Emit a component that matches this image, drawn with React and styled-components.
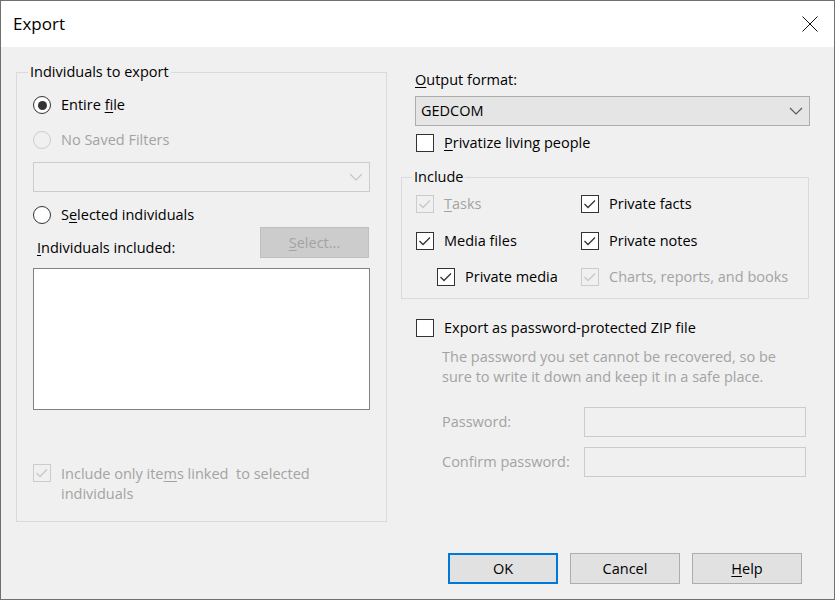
import React from "react";
import styled, { createGlobalStyle, css } from "styled-components";

const FONT = `"Open Sans", "Noto Sans", sans-serif`;

const GlobalStyle = createGlobalStyle`
  html, body { margin: 0; padding: 0; background: #f0f0f0; }
  body { font-family: ${FONT}; font-size: 14.5px; color: #000; }
  u { text-decoration-thickness: 1px; text-underline-offset: 2px; }
`;

const DISABLED = "#a3a3a3";

const Window = styled.div`
  width: 835px;
  height: 600px;
  box-sizing: border-box;
  border: 1px solid #707070;
  display: flex;
  flex-direction: column;
  background: #f0f0f0;
  font-family: ${FONT};
  font-size: 14.5px;
  line-height: 20px;
`;

const TitleBar = styled.div`
  height: 46px;
  flex: none;
  background: #fff;
  display: flex;
  align-items: center;
  justify-content: space-between;
  padding: 0 16px 0 12px;
`;

const Title = styled.div`
  font-size: 17px;
  line-height: 22px;
`;

const CloseIcon = styled.svg`
  width: 16px;
  height: 16px;
  display: block;
`;

const Body = styled.div`
  flex: 1;
  display: flex;
  flex-direction: column;
  padding: 0 0 15px 15px;
`;

const Columns = styled.div`
  display: flex;
  align-items: flex-start;
  padding-top: 15px;
`;

const GroupBox = styled.fieldset`
  margin: 0;
  margin-top: ${(p) => p.$mt || 0}px;
  min-width: 0;
  box-sizing: border-box;
  width: ${(p) => p.$width}px;
  border: 1px solid #dadada;
  padding: ${(p) => p.$padding};
`;

const GroupTitle = styled.legend`
  padding: 0 2px;
  margin-left: ${(p) => p.$offset}px;
  line-height: 20px;
`;

const Stack = styled.div`
  display: flex;
  flex-direction: column;
`;

const Row = styled.div`
  display: flex;
  align-items: ${(p) => p.$align || "center"};
  gap: 10px;
  margin-top: ${(p) => p.$mt || 0}px;
  margin-left: ${(p) => p.$ml || 0}px;
  color: ${(p) => (p.$disabled ? DISABLED : "#000")};
  min-height: 20px;
  white-space: nowrap;
`;

const RadioCircle = styled.span`
  flex: none;
  width: 18px;
  height: 18px;
  box-sizing: border-box;
  border-radius: 50%;
  border: 1px solid ${(p) => (p.$disabled ? "#cccccc" : "#333333")};
  background: ${(p) => (p.$disabled ? "#f0f0f0" : "#fff")};
  display: flex;
  align-items: center;
  justify-content: center;
  ${(p) =>
    p.$checked &&
    css`
      &::after {
        content: "";
        width: 9px;
        height: 9px;
        border-radius: 50%;
        background: #333;
      }
    `}
`;

const Box = styled.span`
  flex: none;
  width: 18px;
  height: 18px;
  box-sizing: border-box;
  border: 1px solid ${(p) => (p.$disabled ? "#cccccc" : "#333333")};
  background: ${(p) => (p.$disabled ? "#f0f0f0" : "#fff")};
  display: flex;
  align-items: center;
  justify-content: center;
`;

const Radio = ({ checked, disabled, children, mt }) => (
  <Row $mt={mt} $disabled={disabled}>
    <RadioCircle $checked={checked} $disabled={disabled} />
    <span>{children}</span>
  </Row>
);

const CheckBox = ({ checked, disabled }) => (
  <Box $disabled={disabled}>
    {checked && (
      <svg width="16" height="16" viewBox="0 0 16 16">
        <polyline
          points="2.5,8 6,11.5 13,4.5"
          fill="none"
          stroke={disabled ? "#c8c8c8" : "#333"}
          strokeWidth="1.3"
        />
      </svg>
    )}
  </Box>
);

const Check = ({ checked, disabled, children, mt, ml, align }) => (
  <Row $mt={mt} $ml={ml} $disabled={disabled} $align={align}>
    <CheckBox checked={checked} disabled={disabled} />
    <span>{children}</span>
  </Row>
);

const Combo = styled.div`
  box-sizing: border-box;
  height: 30px;
  margin-top: ${(p) => p.$mt || 0}px;
  margin-left: ${(p) => p.$ml || 0}px;
  width: ${(p) => p.$width}px;
  border: 1px solid ${(p) => (p.$disabled ? "#cccccc" : "#adadad")};
  background: ${(p) => (p.$disabled ? "#f0f0f0" : "#e5e5e5")};
  display: flex;
  align-items: center;
  justify-content: space-between;
  padding: 0 6px 0 5px;
`;

const Chevron = ({ disabled }) => (
  <svg width="14" height="8" viewBox="0 0 14 8">
    <polyline
      points="1,1 7,7 13,1"
      fill="none"
      stroke={disabled ? "#c4c4c4" : "#555"}
      strokeWidth="1.1"
    />
  </svg>
);

const IncludedRow = styled.div`
  display: flex;
  align-items: flex-end;
  justify-content: space-between;
  margin-top: 2px;
  padding: 0 2px 0 4px;
`;

const WinButton = styled.button`
  box-sizing: border-box;
  width: ${(p) => p.$width || 110}px;
  height: 31px;
  font-family: ${FONT};
  font-size: 14.5px;
  padding: 0;
  color: ${(p) => (p.disabled ? DISABLED : "#000")};
  background: ${(p) => (p.disabled ? "#cccccc" : "#e1e1e1")};
  border: ${(p) =>
    p.$default ? "2px solid #0078d7" : p.disabled ? "1px solid #bfbfbf" : "1px solid #adadad"};
`;

const ListBox = styled.div`
  margin-top: 10px;
  height: 142px;
  width: 337px;
  box-sizing: border-box;
  background: #fff;
  border: 1px solid #828282;
`;

const RightColumn = styled.div`
  margin-left: 14px;
  width: 409px;
  padding-top: 8px;
  display: flex;
  flex-direction: column;
`;

const Label = styled.div`
  margin-left: ${(p) => p.$ml || 0}px;
  color: ${(p) => (p.$disabled ? DISABLED : "#000")};
  white-space: nowrap;
`;

const IncludeGrid = styled.div`
  display: grid;
  grid-template-columns: 165px 1fr;
  grid-template-rows: 20px 20px 20px;
  row-gap: 17px;
  margin-top: 7px;
  & > :nth-child(5),
  & > :nth-child(6) {
    margin-top: -2px;
  }
`;

const Note = styled.div`
  margin: 9px 0 0 41px;
  color: ${DISABLED};
  line-height: 20px;
`;

const FieldRow = styled.div`
  display: flex;
  align-items: center;
  margin: ${(p) => p.$mt}px 0 0 41px;
`;

const FieldLabel = styled.div`
  width: 142px;
  color: ${DISABLED};
`;

const TextInput = styled.div`
  width: 222px;
  height: 30px;
  box-sizing: border-box;
  border: 1px solid #cccccc;
  background: #f0f0f0;
`;

const ButtonRow = styled.div`
  margin-top: auto;
  display: flex;
  justify-content: flex-end;
  gap: 12px;
  padding-right: 32px;
`;

export default function App() {
  return (
    <>
      <GlobalStyle />
      <Window>
        <TitleBar>
          <Title>Export</Title>
          <CloseIcon viewBox="0 0 16 16">
            <path d="M0.5,0.5 L15.5,15.5 M15.5,0.5 L0.5,15.5" stroke="#111" strokeWidth="1" fill="none" />
          </CloseIcon>
        </TitleBar>
        <Body>
          <Columns>
            <GroupBox $width={371} $padding="0 15px 17px 16px">
              <GroupTitle $offset={-5}>Individuals to export</GroupTitle>
              <Stack>
                <Radio checked mt={13}>
                  Entire <u>f</u>ile
                </Radio>
                <Radio disabled mt={15}>
                  No Saved Filters
                </Radio>
                <Combo $disabled $mt={12} $width={337}>
                  <span />
                  <Chevron disabled />
                </Combo>
                <Radio mt={13}>
                  S<u>e</u>lected individuals
                </Radio>
                <IncludedRow>
                  <Label>
                    <u>I</u>ndividuals included:
                  </Label>
                  <WinButton disabled $width={109}>
                    <u>S</u>elect...
                  </WinButton>
                </IncludedRow>
                <ListBox />
                <Check checked disabled mt={54} align="flex-start">
                  Include only ite<u>m</u>s linked{"\u00a0"} to selected
                  <br />
                  individuals
                </Check>
              </Stack>
            </GroupBox>
            <RightColumn>
              <Label $ml={14}>
                <u>O</u>utput format:
              </Label>
              <Combo $mt={6} $ml={14} $width={395}>
                <span>GEDCOM</span>
                <Chevron />
              </Combo>
              <Check mt={7} ml={15}>
                <u>P</u>rivatize living people
              </Check>
              <GroupBox $width={408} $mt={14} $padding="0 10px 10px 14px">
                <GroupTitle $offset={-4}>Include</GroupTitle>
                <IncludeGrid>
                  <Check checked disabled>
                    <u>T</u>asks
                  </Check>
                  <Check checked>Private facts</Check>
                  <Check checked>Media files</Check>
                  <Check checked>Private notes</Check>
                  <Check checked ml={21}>
                    Private media
                  </Check>
                  <Check checked disabled>
                    Charts, reports, and books
                  </Check>
                </IncludeGrid>
              </GroupBox>
              <Check mt={19} ml={15}>
                Export as password-protected ZIP file
              </Check>
              <Note>
                The password you set cannot be recovered, so be
                <br />
                sure to write it down and keep it in a safe place.
              </Note>
              <FieldRow $mt={20}>
                <FieldLabel>Password:</FieldLabel>
                <TextInput />
              </FieldRow>
              <FieldRow $mt={10}>
                <FieldLabel>Confirm password:</FieldLabel>
                <TextInput />
              </FieldRow>
            </RightColumn>
          </Columns>
          <ButtonRow>
            <WinButton $default>OK</WinButton>
            <WinButton>Cancel</WinButton>
            <WinButton>
              <u>H</u>elp
            </WinButton>
          </ButtonRow>
        </Body>
      </Window>
    </>
  );
}
